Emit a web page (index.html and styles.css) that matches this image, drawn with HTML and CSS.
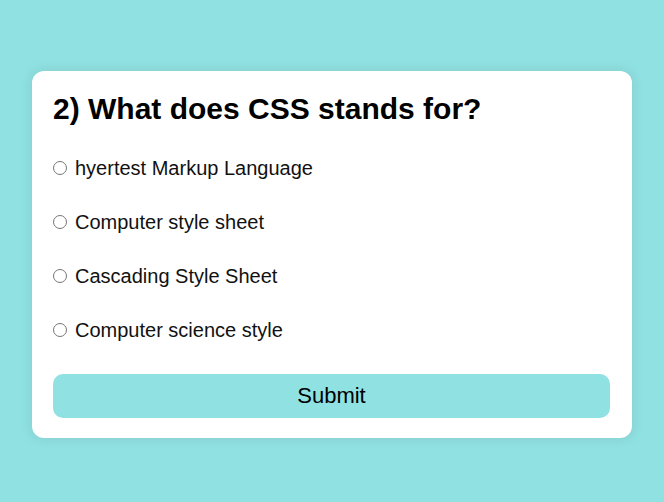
FILE: index.html
```html
<!DOCTYPE html>
<html>
<head>
<meta charset="utf-8">
<link rel="stylesheet" href="styles.css">
</head>
<body>
<div class="quiz">
  <h2 class="question">2) What does CSS stands for?</h2>
  <ul class="options">
    <li class="option"><input type="radio" name="answer" id="a"><label for="a">hyertest Markup Language</label></li>
    <li class="option"><input type="radio" name="answer" id="b"><label for="b">Computer style sheet</label></li>
    <li class="option"><input type="radio" name="answer" id="c"><label for="c">Cascading Style Sheet</label></li>
    <li class="option"><input type="radio" name="answer" id="d"><label for="d">Computer science style</label></li>
  </ul>
  <button class="submit">Submit</button>
</div>
</body>
</html>
```
FILE: styles.css
```css
html, body {
  margin: 0;
  padding: 0;
}
body {
  background: #8fe1e2;
  font-family: "Liberation Sans", Arial, sans-serif;
  display: flex;
  justify-content: center;
  align-items: flex-start;
  padding-top: 71px;
  min-height: 502px;
  box-sizing: border-box;
}
.quiz {
  width: 600px;
  box-sizing: border-box;
  background: #fff;
  border-radius: 12px;
  box-shadow: 0 0 10px 2px rgba(100, 100, 100, 0.12);
  padding: 21px 22px 20px 21px;
}
.question {
  margin: 0;
  font-size: 30px;
  font-weight: bold;
  line-height: 34px;
  color: #000;
}
.options {
  list-style: none;
  margin: 15px 0 0;
  padding: 0;
}
.option {
  display: flex;
  align-items: center;
  height: 54px;
  font-size: 20px;
  color: #111;
}
.option input {
  margin: 0 8px 0 0;
  width: 14px;
  height: 14px;
}
.submit {
  display: block;
  width: 100%;
  height: 44px;
  margin-top: 17px;
  border: none;
  border-radius: 10px;
  background: #8fe1e2;
  font-family: "Liberation Sans", Arial, sans-serif;
  font-size: 22px;
  color: #000;
}
```
